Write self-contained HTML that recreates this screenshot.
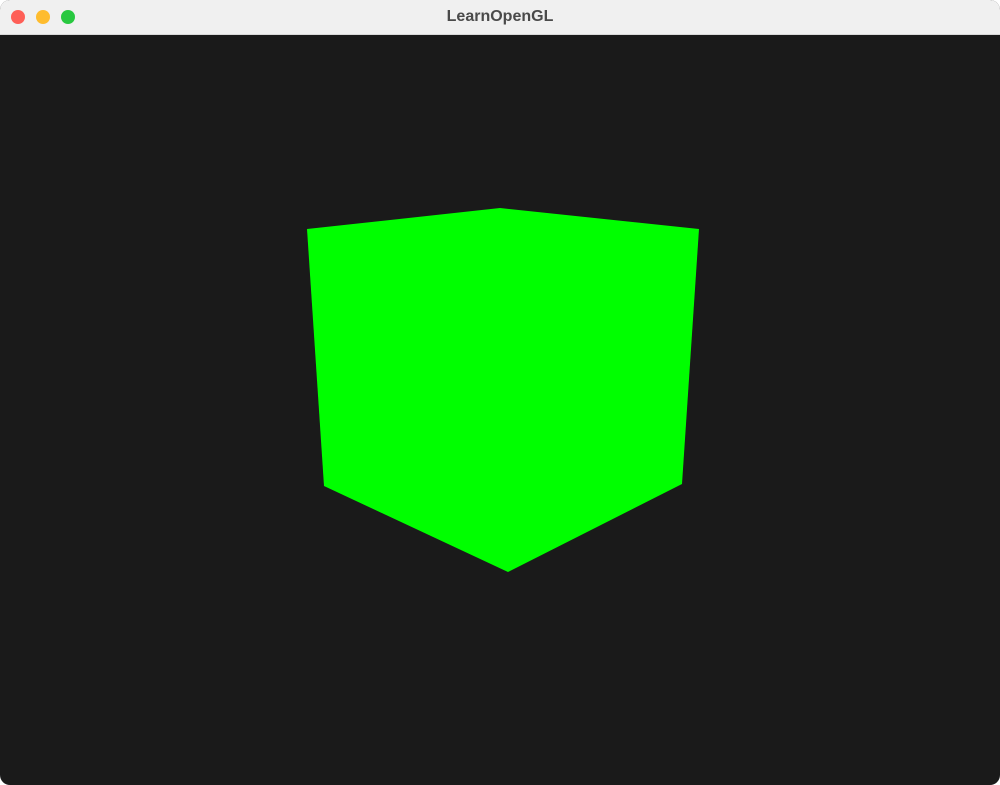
<!DOCTYPE html>
<html><head><style>
html,body{margin:0;padding:0;background:#fff;}
.win{position:absolute;left:0;top:0;width:1000px;height:785px;border-radius:10px;overflow:hidden;background:#1a1a1a;}
.bar{position:absolute;left:0;top:0;width:1000px;height:34px;background:#f0f0f0;border-bottom:1px solid #d8d8d8;}
.t{position:absolute;left:0;width:1000px;top:8px;text-align:center;font:bold 16px "Liberation Sans",sans-serif;color:#4a4a4a;}
.d{position:absolute;top:10px;width:14px;height:14px;border-radius:50%;}
</style></head><body>
<div class="win">
<div class="bar"><div class="d" style="left:11px;background:#fe5f57"></div><div class="d" style="left:36px;background:#febc2e"></div><div class="d" style="left:61px;background:#28c840"></div><div class="t">LearnOpenGL</div></div>
<svg style="position:absolute;left:0;top:0" width="1000" height="785"><polygon points="307,229 500,208 699,229 682,484 508,572 324,486" fill="#00ff00"/></svg>
</div>
</body></html>
